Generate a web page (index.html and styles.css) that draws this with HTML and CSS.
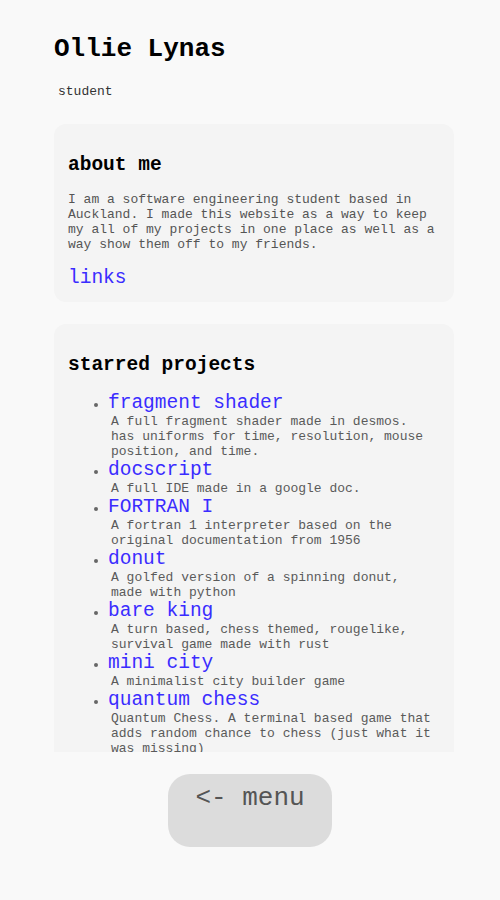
FILE: index.html
```html
<!DOCTYPE html>
<html>
<head>
<meta charset="utf-8">
<link rel="stylesheet" href="styles.css">
</head>
<body>
<main class="page">
  <header class="intro">
    <h1 class="name">Ollie Lynas</h1>
    <p class="role">student</p>
  </header>
  <section class="card about">
    <h2 class="card-title">about me</h2>
    <p class="about-text">I am a software engineering student based in Auckland. I made this website as a way to keep my all of my projects in one place as well as a way show them off to my friends.</p>
    <a class="big-link" href="#">links</a>
  </section>
  <section class="card projects">
    <h2 class="card-title">starred projects</h2>
    <ul class="project-list">
      <li class="project"><a class="big-link" href="#">fragment shader</a><p class="desc">A full fragment shader made in desmos. has uniforms for time, resolution, mouse position, and time.</p></li>
      <li class="project"><a class="big-link" href="#">docscript</a><p class="desc">A full IDE made in a google doc.</p></li>
      <li class="project"><a class="big-link" href="#">FORTRAN I</a><p class="desc">A fortran 1 interpreter based on the original documentation from 1956</p></li>
      <li class="project"><a class="big-link" href="#">donut</a><p class="desc">A golfed version of a spinning donut, made with python</p></li>
      <li class="project"><a class="big-link" href="#">bare king</a><p class="desc">A turn based, chess themed, rougelike, survival game made with rust</p></li>
      <li class="project"><a class="big-link" href="#">mini city</a><p class="desc">A minimalist city builder game</p></li>
      <li class="project"><a class="big-link" href="#">quantum chess</a><p class="desc">Quantum Chess. A terminal based game that adds random chance to chess (just what it was missing)</p></li>
    </ul>
  </section>
  <div class="nav">
    <a class="menu-btn" href="#">&lt;- menu</a>
  </div>
</main>
</body>
</html>
```

FILE: styles.css
```css
html, body {
  margin: 0;
  padding: 0;
  background: #f9f9f9;
}
body {
  font-family: "Liberation Mono", "Courier New", monospace;
  color: #555;
}
.page {
  width: 400px;
  margin-left: 54px;
  padding-top: 35px;
}
.name {
  margin: 0;
  font-size: 26px;
  font-weight: bold;
  color: #000;
  line-height: 29px;
}
.role {
  margin: 20px 0 0 0;
  padding-left: 4px;
  font-size: 13px;
  line-height: 15px;
  color: #333;
}
.card {
  margin-top: 25px;
  background: #f4f4f4;
  border-radius: 12px;
  padding: 14px 14px 13px 14px;
}
.projects {
  margin-top: 22px;
  height: 414px;
  padding-bottom: 0;
  border-radius: 12px 12px 0 0;
  overflow: hidden;
  box-sizing: content-box;
}
.card-title {
  margin: 16px 0 16px 0;
  font-size: 19.5px;
  line-height: 22px;
  font-weight: bold;
  color: #000;
}
.about-text {
  margin: 0 0 15px 0;
  font-size: 13px;
  line-height: 15px;
}
.big-link {
  display: block;
  font-size: 19.5px;
  line-height: 22px;
  color: #3a2cff;
  text-decoration: none;
}
.project-list {
  margin: 0;
  padding: 0 5px 0 40px;
  font-size: 13px;
  color: #666;
}
.project {
  line-height: 22px;
}
.desc {
  margin: 0;
  padding-left: 3px;
  font-size: 13px;
  line-height: 15px;
  color: #5a5a5a;
}
.nav {
  display: flex;
  justify-content: center;
  margin-top: 22px;
  margin-left: -54px;
  width: 500px;
}
.menu-btn {
  display: block;
  width: 164px;
  height: 73px;
  box-sizing: border-box;
  padding-top: 10px;
  text-align: center;
  background: #dcdcdc;
  border-radius: 22px;
  font-size: 26px;
  line-height: 29px;
  color: #555;
  text-decoration: none;
}
```
